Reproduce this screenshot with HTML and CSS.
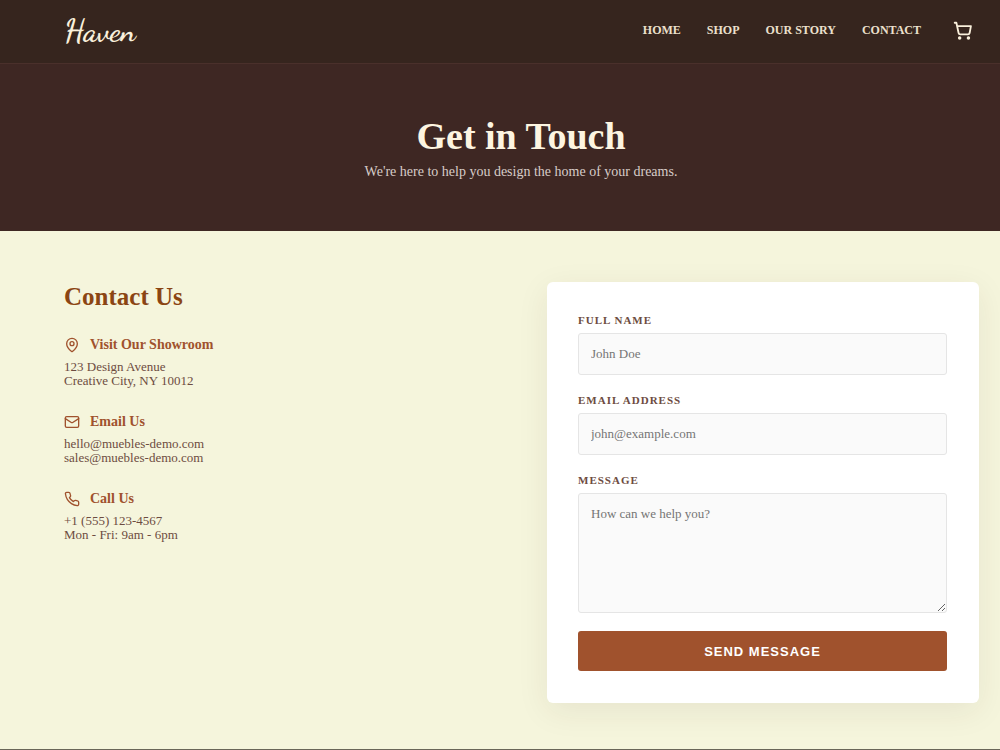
FILE: index.html
```html
<!DOCTYPE html>
<html lang="en">
<head>
<meta charset="utf-8">
<meta name="viewport" content="width=device-width, initial-scale=1">
<title>Haven - Contact</title>
<link rel="stylesheet" href="styles.css">
</head>
<body>
<header class="header">
  <a class="logo" href="#">Haven</a>
  <nav class="nav" aria-label="Main">
    <a href="#">Home</a>
    <a href="#">Shop</a>
    <a href="#">Our Story</a>
    <a href="#">Contact</a>
  </nav>
  <button class="cart" type="button" aria-label="Cart">
    <svg width="20" height="20" viewBox="0 0 24 24" fill="none" stroke="currentColor" stroke-width="2.2" stroke-linecap="round" stroke-linejoin="round"><circle cx="8" cy="20.5" r="1" fill="currentColor"/><circle cx="18.5" cy="20.5" r="1" fill="currentColor"/><path d="M2.05 2.05h2l2.66 12.42a2 2 0 0 0 2 1.58h9.28a2 2 0 0 0 1.95-1.57l1.55-8.43H5.12"/></svg>
  </button>
</header>
<section class="hero">
  <h1>Get in Touch</h1>
  <p>We're here to help you design the home of your dreams.</p>
</section>
<main class="content">
  <section class="info">
    <h2>Contact Us</h2>
    <div class="item">
      <h3><svg class="icon" viewBox="0 0 24 24"><path d="M20 10c0 5-5.5 10.2-7.4 11.8a1 1 0 0 1-1.2 0C9.5 20.2 4 15 4 10a8 8 0 0 1 16 0"/><circle cx="12" cy="10" r="3"/></svg>Visit Our Showroom</h3>
      <p>123 Design Avenue<br>Creative City, NY 10012</p>
    </div>
    <div class="item">
      <h3><svg class="icon" viewBox="0 0 24 24"><rect x="2" y="4" width="20" height="16" rx="2"/><path d="m22 7-8.97 5.7a1.94 1.94 0 0 1-2.06 0L2 7"/></svg>Email Us</h3>
      <p>hello@muebles-demo.com<br>sales@muebles-demo.com</p>
    </div>
    <div class="item">
      <h3><svg class="icon" viewBox="0 0 24 24"><path d="M22 16.92v3a2 2 0 0 1-2.18 2 19.79 19.79 0 0 1-8.63-3.07 19.5 19.5 0 0 1-6-6 19.79 19.79 0 0 1-3.07-8.67A2 2 0 0 1 4.11 2h3a2 2 0 0 1 2 1.72 12.84 12.84 0 0 0 .7 2.81 2 2 0 0 1-.45 2.11L8.09 9.91a16 16 0 0 0 6 6l1.27-1.27a2 2 0 0 1 2.11-.45 12.84 12.84 0 0 0 2.81.7A2 2 0 0 1 22 16.92z"/></svg>Call Us</h3>
      <p>+1 (555) 123-4567<br>Mon - Fri: 9am - 6pm</p>
    </div>
  </section>
  <form class="card">
    <label for="name">Full Name</label>
    <input id="name" type="text" placeholder="John Doe">
    <label for="email">Email Address</label>
    <input id="email" type="email" placeholder="john@example.com">
    <label for="message">Message</label>
    <textarea id="message" placeholder="How can we help you?"></textarea>
    <button class="send" type="submit">Send Message</button>
  </form>
</main>
<footer class="footer"></footer>
</body>
</html>
```
FILE: styles.css
```css
* { box-sizing: border-box; margin: 0; }
body {
  background: #f5f5dc;
  color: #6d4c41;
  font-family: "Liberation Serif", serif;
  font-size: 13px;
}
.header {
  display: flex;
  align-items: center;
  height: 64px;
  padding: 0 27px 2px 64px;
  background: #36251e;
  border-bottom: 1px solid #4a302b;
}
.logo {
  color: #faf0dc;
  font-family: "Dancing Script", cursive;
  font-size: 31px;
  font-weight: 700;
  text-decoration: none;
}
.nav { display: flex; gap: 26px; margin-left: auto; }
.nav a {
  color: #ece0cd;
  font-size: 12px;
  font-weight: 600;
  text-decoration: none;
  text-transform: uppercase;
}
.cart {
  display: flex;
  margin-left: 32px;
  padding: 0;
  border: 0;
  background: none;
  color: #faf0dc;
}
.hero {
  padding: 50px 0 50px 42px;
  background: #3e2723;
  color: #fdf5e1;
  text-align: center;
}
.hero h1 { font-size: 38px; line-height: 44px; }
.hero p { padding-top: 5px; font-size: 14px; line-height: 18px; color: #d7ccc8; }
.content {
  display: grid;
  grid-template-columns: 1fr 1fr;
  gap: 51px;
  padding: 51px 21px 46px 64px;
}
.info h2 {
  margin-bottom: 24px;
  color: #8b4513;
  font-size: 25px;
  line-height: 30px;
}
.item { margin-bottom: 25px; }
.item h3 {
  display: flex;
  align-items: center;
  gap: 10px;
  margin-bottom: 7px;
  color: #a0522d;
  font-size: 14px;
  line-height: 17px;
}
.item p { line-height: 14px; }
.icon {
  width: 16px;
  height: 16px;
  fill: none;
  stroke: currentColor;
  stroke-width: 2;
  stroke-linecap: round;
  stroke-linejoin: round;
}
.card {
  display: flex;
  flex-direction: column;
  padding: 31px 32px 32px 31px;
  background: #fff;
  border-radius: 6px;
  box-shadow: 0 8px 32px rgba(62, 39, 35, 0.08);
}
.card label {
  margin-bottom: 6px;
  font-size: 11px;
  font-weight: 600;
  line-height: 14px;
  letter-spacing: 1px;
  text-transform: uppercase;
}
.card input,
.card textarea {
  width: 100%;
  margin-bottom: 18px;
  padding: 12px;
  border: 1px solid #e5e5e5;
  border-radius: 3px;
  background: #fafafa;
  color: #3e2723;
  font: 13px "Liberation Serif", serif;
}
.card input { height: 42px; }
.card textarea { height: 120px; resize: vertical; }
.send {
  height: 40px;
  border: 0;
  border-radius: 3px;
  background: #a0522d;
  color: #fff;
  font: bold 13px "Liberation Sans", sans-serif;
  letter-spacing: 1px;
  text-transform: uppercase;
}
.footer { height: 1px; background: #696658; }
```
